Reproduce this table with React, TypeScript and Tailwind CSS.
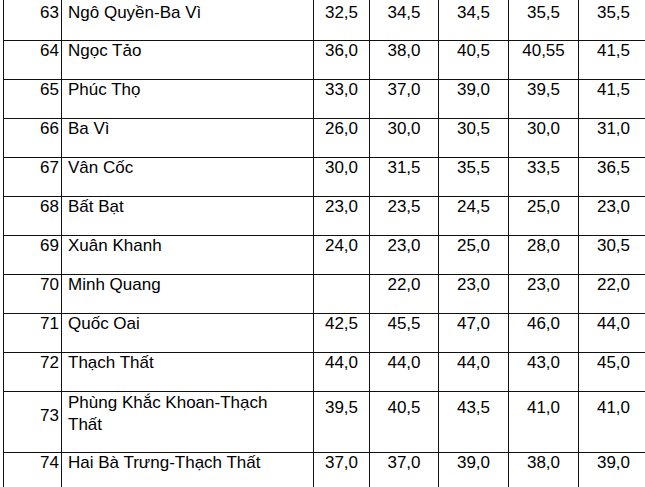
const rows = [
  { no: 63, name: 'Ngô Quyền-Ba Vì', values: ['32,5', '34,5', '34,5', '35,5', '35,5'] },
  { no: 64, name: 'Ngọc Tảo', values: ['36,0', '38,0', '40,5', '40,55', '41,5'] },
  { no: 65, name: 'Phúc Thọ', values: ['33,0', '37,0', '39,0', '39,5', '41,5'] },
  { no: 66, name: 'Ba Vì', values: ['26,0', '30,0', '30,5', '30,0', '31,0'] },
  { no: 67, name: 'Vân Cốc', values: ['30,0', '31,5', '35,5', '33,5', '36,5'] },
  { no: 68, name: 'Bất Bạt', values: ['23,0', '23,5', '24,5', '25,0', '23,0'] },
  { no: 69, name: 'Xuân Khanh', values: ['24,0', '23,0', '25,0', '28,0', '30,5'] },
  { no: 70, name: 'Minh Quang', values: ['', '22,0', '23,0', '23,0', '22,0'] },
  { no: 71, name: 'Quốc Oai', values: ['42,5', '45,5', '47,0', '46,0', '44,0'] },
  { no: 72, name: 'Thạch Thất', values: ['44,0', '44,0', '44,0', '43,0', '45,0'] },
]

const valueWidths = ['w-[56px]', 'w-[69px]', 'w-[70px]', 'w-[70px]', 'w-[70px]']

function Row({
  no,
  name,
  values,
  height,
  padTop = '',
}: {
  no: number
  name: React.ReactNode
  values: string[]
  height: string
  padTop?: string
}) {
  return (
    <div className={`flex border-b border-[#111] ${height}`}>
      <div className={`w-[58px] shrink-0 border-r border-[#111] pr-[2px] text-right ${padTop}`}>{no}</div>
      <div className={`w-[252px] shrink-0 border-r border-[#111] pl-[6px] ${padTop}`}>{name}</div>
      {values.map((v, i) => (
        <div key={i} className={`${valueWidths[i]} shrink-0 border-r border-[#111] text-center ${padTop}`}>
          {v}
        </div>
      ))}
    </div>
  )
}

export default function App() {
  return (
    <div className="h-[487px] w-[645px] overflow-hidden bg-white">
      <div
        className="ml-[3px] w-[646px] border-l border-[#111] text-[17px] leading-[19px] text-black"
        style={{ fontFamily: '"Liberation Sans", Arial, sans-serif' }}
      >
        {rows.map((r, i) => (
          <Row
            key={r.no}
            no={r.no}
            name={r.name}
            values={r.values}
            height={i === 0 ? 'h-[41px]' : 'h-[39px]'}
            padTop={i === 0 ? 'pt-[3px]' : ''}
          />
        ))}

        {/* two-line row */}
        <div className="flex h-[61px] border-b border-[#111]">
          <div className="w-[58px] shrink-0 border-r border-[#111] pr-[2px] pt-[14px] text-right">73</div>
          <div className="w-[252px] shrink-0 border-r border-[#111] pl-[6px] leading-[22px]">
            Phùng Khắc Khoan-Thạch
            <br />
            Thất
          </div>
          {['39,5', '40,5', '43,5', '41,0', '41,0'].map((v, i) => (
            <div key={i} className={`${valueWidths[i]} shrink-0 border-r border-[#111] pt-[6px] text-center`}>
              {v}
            </div>
          ))}
        </div>

        <Row
          no={74}
          name="Hai Bà Trưng-Thạch Thất"
          values={['37,0', '37,0', '39,0', '38,0', '39,0']}
          height="h-[39px]"
        />
      </div>
    </div>
  )
}
